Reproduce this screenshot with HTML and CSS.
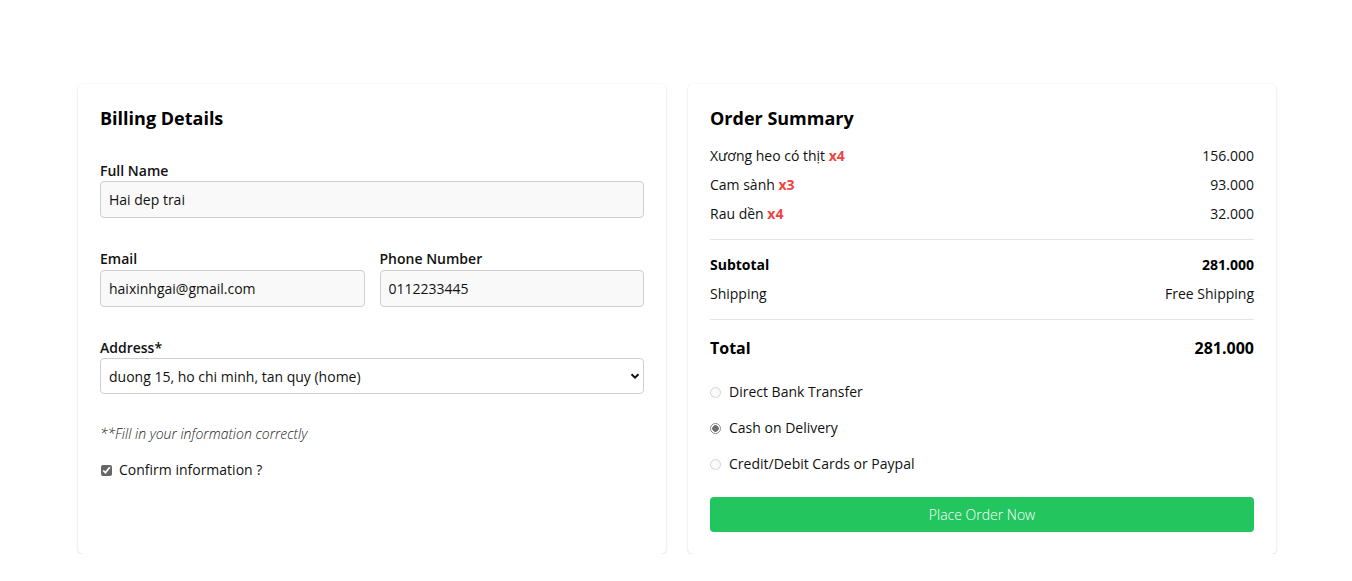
FILE: index.html
```html
<!DOCTYPE html>
<html lang="vi">
<head>
<meta charset="utf-8">
<title>Checkout</title>
<link rel="stylesheet" href="styles.css">
</head>
<body>
<main class="checkout">
  <section class="card billing">
    <h2 class="card-title">Billing Details</h2>
    <div class="field">
      <label class="label">Full Name</label>
      <input class="input" type="text" value="Hai dep trai">
    </div>
    <div class="row">
      <div class="field">
        <label class="label">Email</label>
        <input class="input" type="text" value="haixinhgai@gmail.com">
      </div>
      <div class="field">
        <label class="label">Phone Number</label>
        <input class="input" type="text" value="0112233445">
      </div>
    </div>
    <div class="field">
      <label class="label">Address*</label>
      <div class="select-wrap">
        <select class="select">
          <option>duong 15, ho chi minh, tan quy (home)</option>
        </select>
        <svg class="chevron" width="10" height="8" viewBox="0 0 10 8"><path d="M1.5 2.2 L5 5.6 L8.5 2.2" fill="none" stroke="#111" stroke-width="2"/></svg>
      </div>
    </div>
    <p class="note">**Fill in your information correctly</p>
    <label class="confirm"><input type="checkbox" class="check" checked> Confirm information ?</label>
  </section>

  <section class="card summary">
    <h2 class="card-title">Order Summary</h2>
    <ul class="items">
      <li class="line"><span>Xương heo có thịt <b class="qty">x4</b></span><span>156.000</span></li>
      <li class="line"><span>Cam sành <b class="qty">x3</b></span><span>93.000</span></li>
      <li class="line"><span>Rau dền <b class="qty">x4</b></span><span>32.000</span></li>
    </ul>
    <div class="totals">
      <div class="line strong"><span>Subtotal</span><span>281.000</span></div>
      <div class="line"><span>Shipping</span><span>Free Shipping</span></div>
    </div>
    <div class="line grand"><span>Total</span><span>281.000</span></div>
    <div class="methods">
      <label class="method"><input type="radio" name="pay" class="radio"> Direct Bank Transfer</label>
      <label class="method"><input type="radio" name="pay" class="radio" checked> Cash on Delivery</label>
      <label class="method"><input type="radio" name="pay" class="radio"> Credit/Debit Cards or Paypal</label>
    </div>
    <button class="order-btn">Place Order Now</button>
  </section>
</main>
</body>
</html>
```
FILE: styles.css
```css
* { box-sizing: border-box; }
html, body { margin: 0; padding: 0; background: #fff; }
body {
  font-family: "Open Sans", "Noto Sans", sans-serif;
  font-size: 14px;
  color: #111;
}
.checkout {
  width: 1200px;
  margin: 84px auto 0;
  padding-left: 2px;
  display: grid;
  grid-template-columns: 588px 588px;
  gap: 22px;
}
.card {
  background: #fff;
  border-radius: 5px;
  box-shadow: 0 1px 3px rgba(0,0,0,0.13), 0 0 1px rgba(0,0,0,0.05);
  padding: 22px;
  display: flex;
  flex-direction: column;
}
.card-title {
  margin: 0;
  font-size: 18px;
  line-height: 24px;
  font-weight: 700;
  color: #000;
}
.field { display: flex; flex-direction: column; margin-top: 31px; }
.row { display: grid; grid-template-columns: 1fr 1fr; gap: 15px; }
.label {
  font-size: 14px;
  line-height: 20px;
  font-weight: 600;
  color: #111;
}
.input, .select {
  height: 37px;
  border: 1px solid #cfcfd4;
  border-radius: 4px;
  background: #f9f9f9;
  padding: 0 8px;
  font-family: inherit;
  font-size: 14px;
  color: #111;
  width: 100%;
}
.row .input { margin-top: 1px; }
.select-wrap { position: relative; }
.select {
  appearance: none;
  -webkit-appearance: none;
  background: #fff;
  height: 36px;
}
.chevron { position: absolute; right: 4px; top: 14px; }
.note {
  margin: 30px 0 0;
  font-style: italic;
  font-weight: 300;
  line-height: 20px;
  color: #222;
}
.confirm {
  margin-top: 16px;
  display: flex;
  align-items: center;
  gap: 7px;
  line-height: 20px;
}
.check {
  margin: 0 0 0 1px;
  width: 11px;
  height: 11px;
  accent-color: #666;
}
.items { list-style: none; margin: 16px 0 0; padding: 0; display: flex; flex-direction: column; gap: 9px; }
.line {
  display: flex;
  justify-content: space-between;
  line-height: 20px;
}
.qty { color: #ef4444; font-weight: 700; }
.totals {
  margin-top: 15px;
  border-top: 1px solid #e5e5e5;
  border-bottom: 1px solid #e5e5e5;
  padding: 15px 0;
  display: flex;
  flex-direction: column;
  gap: 9px;
}
.strong { font-weight: 700; color: #000; }
.grand {
  margin-top: 17px;
  font-size: 16px;
  line-height: 22px;
  font-weight: 700;
  color: #000;
}
.methods { margin-top: 23px; display: flex; flex-direction: column; gap: 16px; }
.method { display: flex; align-items: center; gap: 8px; line-height: 20px; }
.radio {
  appearance: none;
  -webkit-appearance: none;
  margin: 0 0 0 0;
  width: 11px;
  height: 11px;
  border-radius: 50%;
  border: 1px solid #d4d4d4;
  background: #fafafa;
}
.radio:checked {
  border-color: #8a8a8a;
  background: radial-gradient(circle, #6f6f6f 0 3px, #fff 3.5px);
}
.order-btn {
  margin-top: 23px;
  height: 35px;
  border: 0;
  border-radius: 4px;
  background: #22c55e;
  color: #fff;
  font-family: inherit;
  font-size: 14px;
  font-weight: 300;
  width: 100%;
}
```
